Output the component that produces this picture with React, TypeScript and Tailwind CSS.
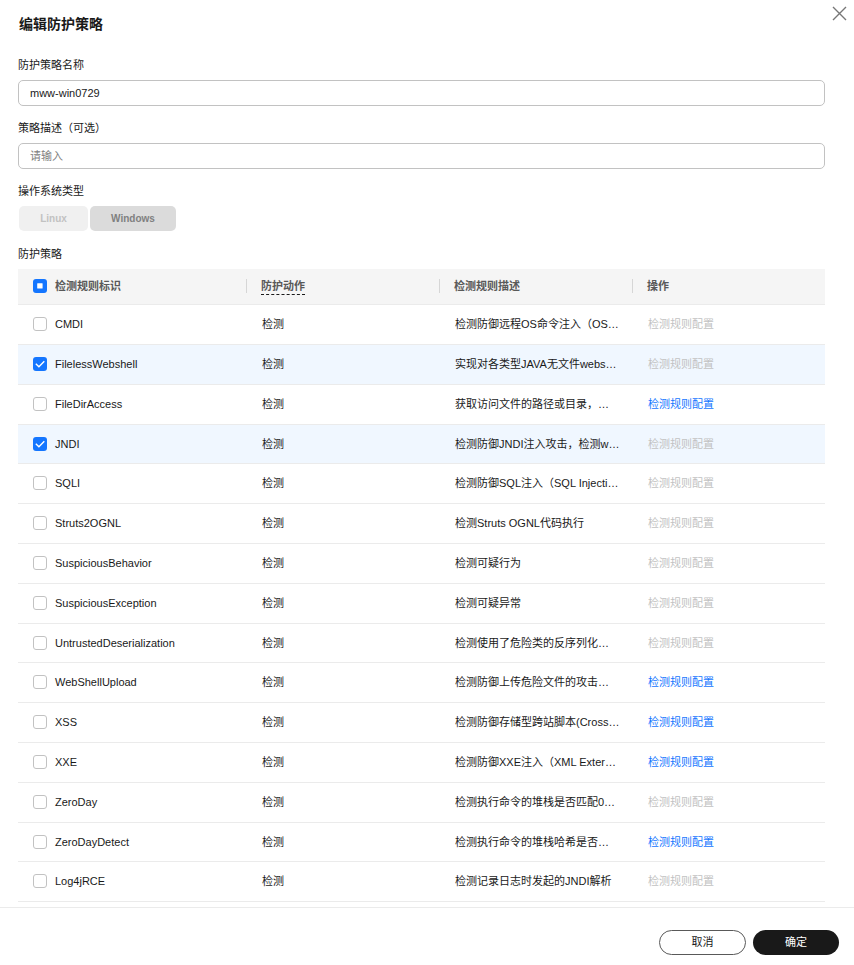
import { useState } from "react";

type Rule = { id: string; desc: string; configurable: boolean; checked?: boolean };

const RULES: Rule[] = [
  { id: "CMDI", desc: "检测防御远程OS命令注入（OS…", configurable: false },
  { id: "FilelessWebshell", desc: "实现对各类型JAVA无文件webs…", configurable: false, checked: true },
  { id: "FileDirAccess", desc: "获取访问文件的路径或目录，…", configurable: true },
  { id: "JNDI", desc: "检测防御JNDI注入攻击，检测w…", configurable: false, checked: true },
  { id: "SQLI", desc: "检测防御SQL注入（SQL Injecti…", configurable: false },
  { id: "Struts2OGNL", desc: "检测Struts OGNL代码执行", configurable: false },
  { id: "SuspiciousBehavior", desc: "检测可疑行为", configurable: false },
  { id: "SuspiciousException", desc: "检测可疑异常", configurable: false },
  { id: "UntrustedDeserialization", desc: "检测使用了危险类的反序列化…", configurable: false },
  { id: "WebShellUpload", desc: "检测防御上传危险文件的攻击…", configurable: true },
  { id: "XSS", desc: "检测防御存储型跨站脚本(Cross…", configurable: true },
  { id: "XXE", desc: "检测防御XXE注入（XML Exter…", configurable: true },
  { id: "ZeroDay", desc: "检测执行命令的堆栈是否匹配0…", configurable: false },
  { id: "ZeroDayDetect", desc: "检测执行命令的堆栈哈希是否…", configurable: true },
  { id: "Log4jRCE", desc: "检测记录日志时发起的JNDI解析", configurable: false },
];

type TickProps = { id: string; checked: boolean; partial?: boolean; onChange: () => void };

function Tick({ id, checked, partial = false, onChange }: TickProps) {
  const filled = checked || partial;
  return (
    <span className="relative block size-[14px] shrink-0">
      <input
        id={id}
        type="checkbox"
        checked={checked}
        ref={(el) => {
          if (el) el.indeterminate = partial;
        }}
        onChange={onChange}
        className={
          filled
            ? "block size-[14px] appearance-none rounded-[3px] bg-[#1476ff]"
            : "block size-[14px] appearance-none rounded-[3px] border border-[#c2c2c2] bg-white"
        }
      />
      {filled && (
        <svg viewBox="0 0 14 14" className="pointer-events-none absolute inset-0 size-[14px]" aria-hidden="true">
          {partial ? (
            <rect x="4.2" y="4.2" width="5.4" height="5.4" rx="0.5" fill="#fff" />
          ) : (
            <path d="M2.8 6.7 5.9 9.7 11.3 4.3" fill="none" stroke="#fff" strokeWidth="1.4" />
          )}
        </svg>
      )}
    </span>
  );
}

function HeadCell({ children }: { children: React.ReactNode }) {
  return (
    <th scope="col" className="p-0 text-left font-bold">
      <div className="flex items-center">
        <span className="h-[14px] border-l border-[#d6d6d6]" />
        <span className="pl-[14px]">{children}</span>
      </div>
    </th>
  );
}

export default function App() {
  const [name, setName] = useState("mww-win0729");
  const [description, setDescription] = useState("");
  const [selected, setSelected] = useState<string[]>(RULES.filter((r) => r.checked).map((r) => r.id));

  const all = selected.length === RULES.length;
  const toggle = (id: string) =>
    setSelected((s) => (s.includes(id) ? s.filter((x) => x !== id) : [...s, id]));

  return (
    <div className="bg-white font-['Liberation_Sans','Noto_Sans_CJK_SC',sans-serif] text-[11px] leading-[18px] text-[#191919]">
      <header className="flex items-start justify-between pl-[19px] pr-[7px]">
        <h1 className="mt-3 text-sm leading-6 font-bold">编辑防护策略</h1>
        <button type="button" aria-label="关闭" className="mt-[6px]">
          <svg viewBox="0 0 15 15" className="size-[15px]" fill="none" stroke="#777" strokeWidth="1.4">
            <path d="M1 1 14 14M14 1 1 14" />
          </svg>
        </button>
      </header>

      <main className="pt-5 pr-[29px] pb-[5px] pl-[18px]">
        <form className="flex flex-col gap-[13px]">
          <div className="flex flex-col gap-[6px]">
            <label htmlFor="policy-name">防护策略名称</label>
            <input
              id="policy-name"
              value={name}
              onChange={(e) => setName(e.target.value)}
              className="h-[26px] w-full rounded-[5px] border border-[#c2c2c2] px-[11px] outline-none"
            />
          </div>
          <div className="flex flex-col gap-[6px]">
            <label htmlFor="policy-desc">策略描述（可选）</label>
            <input
              id="policy-desc"
              value={description}
              placeholder="请输入"
              onChange={(e) => setDescription(e.target.value)}
              className="h-[26px] w-full rounded-[5px] border border-[#c2c2c2] px-[11px] outline-none placeholder:text-[#808080]"
            />
          </div>
          <div className="flex flex-col gap-[6px]" role="group" aria-labelledby="os-type">
            <span id="os-type">操作系统类型</span>
            <div className="flex h-[26px] items-start gap-[2px] pl-px font-bold">
              <button type="button" disabled className="h-[25px] w-[69px] rounded-[5px] bg-[#f0f0f0] text-[10px] text-[#c2c2c2]">
                Linux
              </button>
              <button type="button" disabled className="h-[25px] w-[86px] rounded-[5px] bg-[#dbdbdb] text-[10px] text-[#808080]">
                Windows
              </button>
            </div>
          </div>
        </form>

        <h2 className="mt-[13px] mb-[6px]">防护策略</h2>
        <table className="w-full table-fixed border-collapse">
          <colgroup>
            <col className="w-[228px]" />
            <col />
            <col />
            <col />
          </colgroup>
          <thead>
            <tr className="h-[35px] border-b border-[#ebebeb] bg-[#f5f5f5] text-[#595959]">
              <th scope="col" className="p-0 pl-[15px] text-left font-bold">
                <div className="flex items-center gap-2">
                  <Tick
                    id="rule-all"
                    checked={all}
                    partial={!all && selected.length > 0}
                    onChange={() => setSelected(all ? [] : RULES.map((r) => r.id))}
                  />
                  <label htmlFor="rule-all">检测规则标识</label>
                </div>
              </th>
              <HeadCell>
                <span className="block border-b border-dashed border-[#191919] leading-4">防护动作</span>
              </HeadCell>
              <HeadCell>检测规则描述</HeadCell>
              <HeadCell>操作</HeadCell>
            </tr>
          </thead>
          <tbody>
            {RULES.map((rule) => {
              const on = selected.includes(rule.id);
              return (
                <tr
                  key={rule.id}
                  className={
                    on
                      ? "h-[40px] border-b border-[#ebebeb] bg-[#f0f7ff] [&:nth-child(5n+4)]:h-[39px]"
                      : "h-[40px] border-b border-[#ebebeb] [&:nth-child(5n+4)]:h-[39px]"
                  }
                >
                  <td className="p-0 pl-[15px]">
                    <div className="flex items-center gap-2">
                      <Tick id={`rule-${rule.id}`} checked={on} onChange={() => toggle(rule.id)} />
                      <label htmlFor={`rule-${rule.id}`}>{rule.id}</label>
                    </div>
                  </td>
                  <td className="p-0 pl-4">检测</td>
                  <td className="truncate p-0 pl-4">{rule.desc}</td>
                  <td className="p-0 pl-4">
                    <button
                      type="button"
                      disabled={!rule.configurable}
                      className="block text-[#1476ff] disabled:text-[#c2c2c2]"
                    >
                      检测规则配置
                    </button>
                  </td>
                </tr>
              );
            })}
          </tbody>
        </table>
      </main>

      <footer className="flex justify-end gap-[7px] border-t border-[#ebebeb] pt-[22px] pr-[15px] pb-[10px]">
        <button type="button" className="h-[25px] w-[87px] rounded-full border border-[#595959] bg-white">
          取消
        </button>
        <button type="button" className="h-[25px] w-[86px] rounded-full bg-[#191919] text-white">
          确定
        </button>
      </footer>
    </div>
  );
}
